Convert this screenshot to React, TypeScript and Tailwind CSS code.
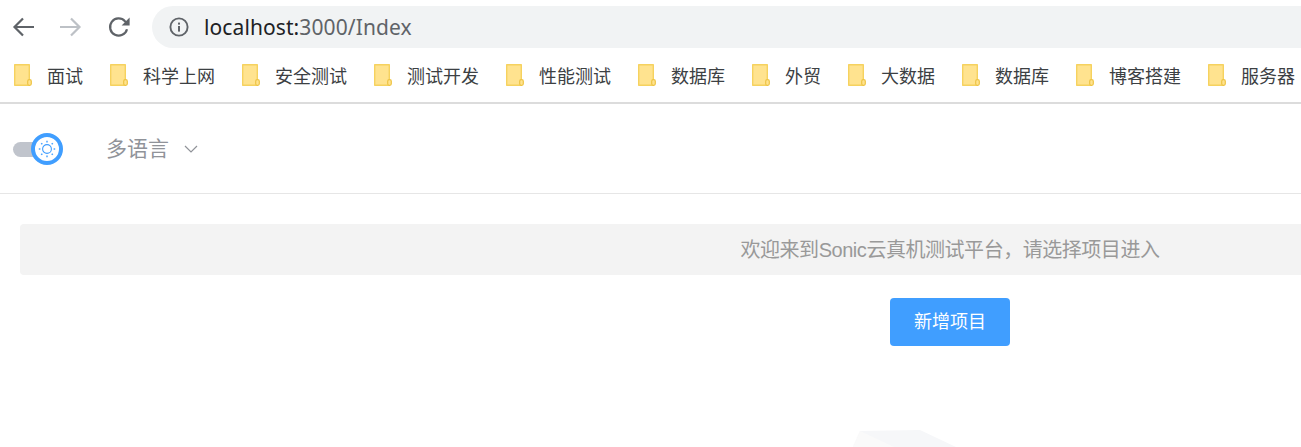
const cjk = "font-['Liberation_Sans','Noto_Sans_CJK_SC',sans-serif]";

const bookmarks = ["面试", "科学上网", "安全测试", "测试开发", "性能测试", "数据库", "外贸", "大数据", "数据库", "博客搭建", "服务器"];

function Folder() {
  return (
    <svg width="18" height="22" viewBox="0 0 18 22" className="shrink-0 mb-[4px]">
      <path d="M0.7 0.7H15.3V21.3H0.7Z" fill="#ffe38f" stroke="#f6d25f" strokeWidth="1.4" strokeLinejoin="round" />
      <rect x="13.7" y="15.7" width="3.6" height="5.6" rx="1.5" fill="#ffe38f" stroke="#eec445" strokeWidth="1.2" />
    </svg>
  );
}

function Sun() {
  const rays = [0, 45, 90, 135, 180, 225, 270, 315];
  return (
    <svg width="20" height="20" viewBox="0 0 20 20" fill="none" stroke="#409eff">
      <circle cx="10" cy="10" r="4.4" strokeWidth="1.1" />
      {rays.map((a) => (
        <line key={a} x1="10" y1="1.8" x2="10" y2="3.4" strokeWidth="1.4" transform={`rotate(${a} 10 10)`} />
      ))}
    </svg>
  );
}

export default function App() {
  return (
    <div className={`w-[1301px] h-[447px] overflow-hidden bg-white ${cjk}`}>
      <div className="w-[1900px]">
        {/* browser toolbar */}
        <div className="h-[55px] flex items-start">
          <div className="flex items-center h-[42px] mt-[6px] pl-[12px] gap-[26px] text-[#5f6368]">
            <svg width="22" height="22" viewBox="0 0 22 22" fill="none" stroke="#5f6368" strokeWidth="2.2">
              <path d="M22 11H2.5M11 2.5L2.5 11L11 19.5" />
            </svg>
            <svg width="22" height="22" viewBox="0 0 22 22" fill="none" stroke="#bdc1c6" strokeWidth="2.2">
              <path d="M0 11H19.5M11 2.5L19.5 11L11 19.5" />
            </svg>
            <svg width="24" height="24" viewBox="0 0 24 24" fill="none" className="-ml-[1px]">
              <path d="M20 14.2A8.6 8.6 0 1 1 18 6.2L20 8.2" stroke="#5f6368" strokeWidth="2.2" />
              <path d="M22.6 2.6V10.6H14.6Z" fill="#5f6368" />
            </svg>
          </div>
          <div className="ml-[21px] mt-[6px] h-[42px] w-[1400px] rounded-full bg-[#f1f3f4] flex items-center pl-[17px]">
            <svg width="20" height="20" viewBox="0 0 20 20" fill="none">
              <circle cx="10" cy="10" r="8.6" stroke="#5f6368" strokeWidth="1.9" />
              <rect x="9" y="9" width="2" height="5.6" fill="#5f6368" />
              <rect x="9" y="5.6" width="2" height="2" fill="#5f6368" />
            </svg>
            <div className="ml-[15px] text-[21px] font-['Noto_Sans',sans-serif] tracking-[0.1px] mt-[1px]">
              <span className="text-[#202124]">localhost:</span>
              <span className="text-[#5f6368]">3000/Index</span>
            </div>
          </div>
        </div>
        {/* bookmarks */}
        <div className="h-[49px] flex items-center pl-[14px] pb-[3px] border-b-2 border-[#dcdcdc]">
          {bookmarks.map((name, i) => (
            <div key={i} className="flex items-center mr-[27px]">
              <Folder />
              <span className="ml-[15px] text-[18px] leading-[24px] text-[#3c4043] whitespace-nowrap">{name}</span>
            </div>
          ))}
        </div>
        {/* app header */}
        <div className="h-[90px] border-b border-[#e6e6e6] flex items-center pl-[13px]">
          <div className="relative w-[50px] h-[15px] mt-[1px]">
            <div className="w-[36px] h-[15px] rounded-full bg-[#c0c4cc]" />
            <div className="absolute left-[18px] top-[-9px] w-[32px] h-[32px] rounded-full bg-white border-[4px] border-[#409eff] flex items-center justify-center">
              <Sun />
            </div>
          </div>
          <span className="ml-[43px] text-[21px] text-[#909399]">多语言</span>
          <svg width="14" height="8" viewBox="0 0 14 8" fill="none" stroke="#909399" strokeWidth="1.2" className="ml-[15px]">
            <path d="M1 1L7 7L13 1" />
          </svg>
        </div>
        {/* content */}
        <div className="px-[20px] pt-[30px]">
          <div className="h-[51px] rounded-[4px] bg-[#f3f3f3] flex items-center justify-center text-[20px] tracking-[-0.46px] text-[#999999]">
            欢迎来到Sonic云真机测试平台，请选择项目进入
          </div>
          <div className="flex justify-center mt-[23px]">
            <button className="w-[120px] h-[48px] rounded-[4px] bg-[#409eff] text-white text-[18px]">新增项目</button>
          </div>
          <div className="flex justify-center mt-[84px]">
            <svg width="200" height="20" viewBox="0 0 200 20" className="block">
              <path d="M10 1L70 0L106 17H3Z" fill="#f6f7f9" />
              <path d="M10 1L44 17H3Z" fill="#fafafa" />
            </svg>
          </div>
        </div>
      </div>
    </div>
  );
}
